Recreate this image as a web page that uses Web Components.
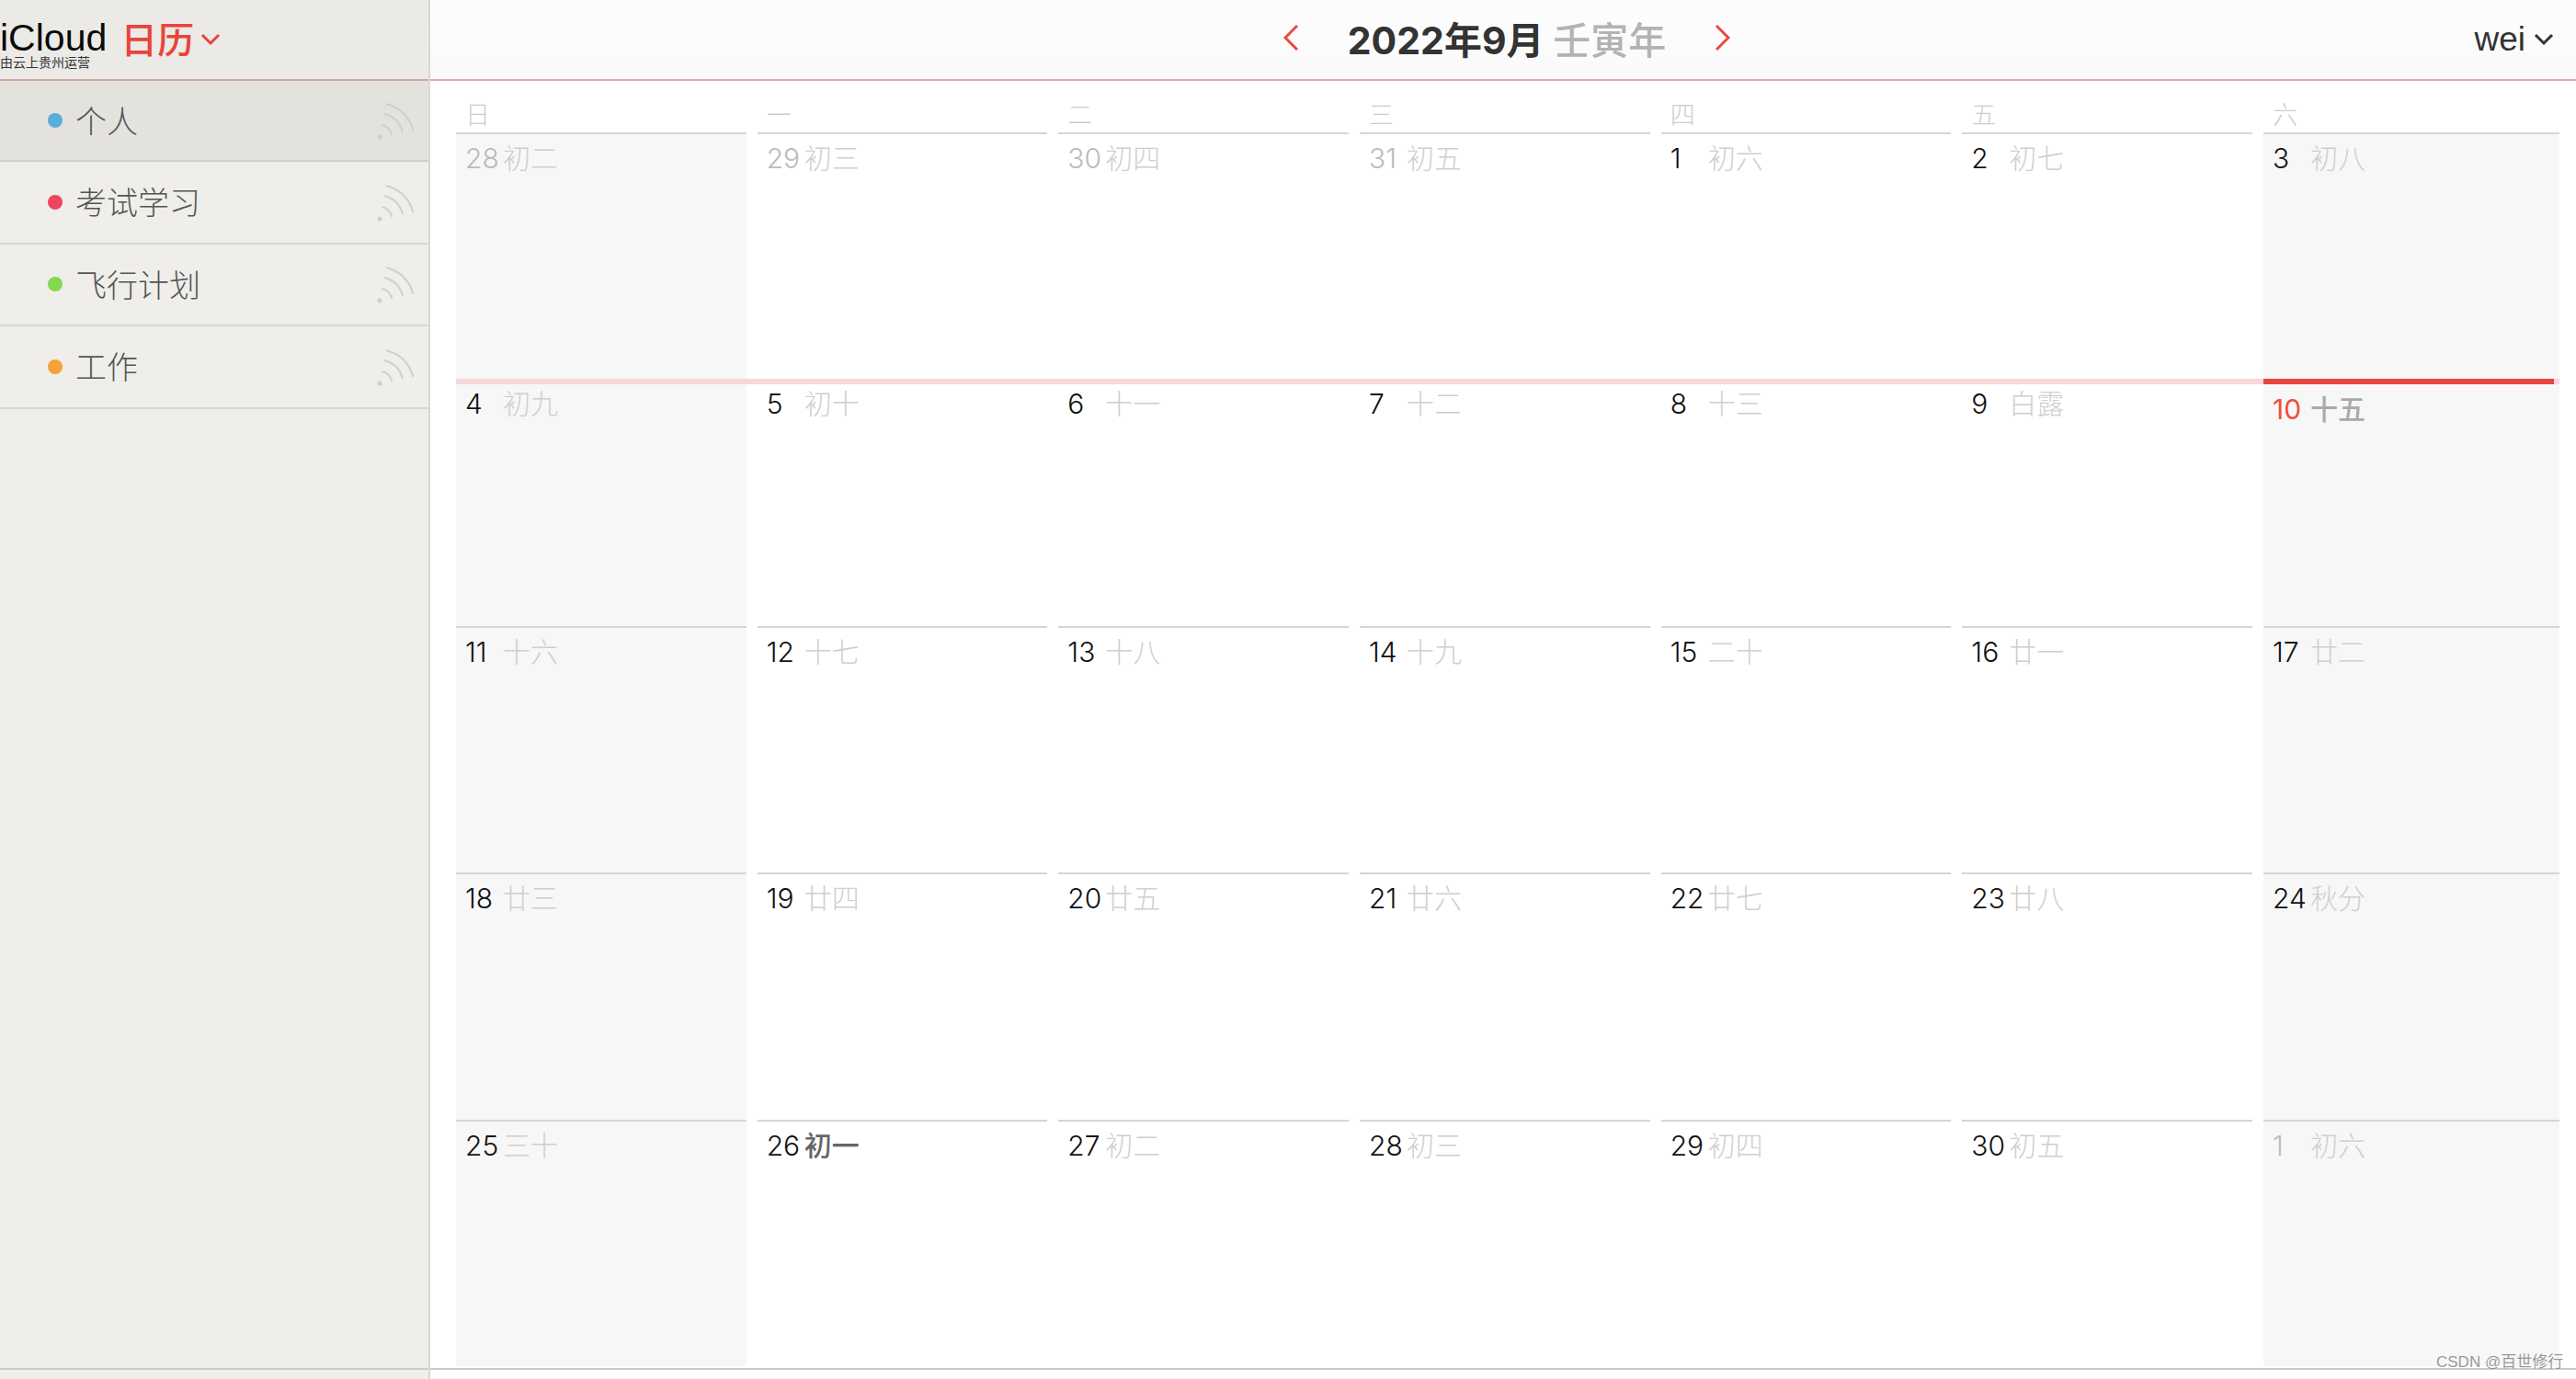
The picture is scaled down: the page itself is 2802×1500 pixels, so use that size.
<!DOCTYPE html>
<html lang="zh">
<head>
<meta charset="utf-8">
<title>iCloud 日历</title>
<style>
	html, body { margin: 0; height: 100%; background: #fff; }
	body { font-family: 'Liberation Sans', 'Noto Sans CJK SC', sans-serif; }
</style>
</head>
<body>
<cal-app>
	<cal-sidebar slot="side">
		<cal-item color="#59acdc" active>个人</cal-item>
		<cal-item color="#ef4560">考试学习</cal-item>
		<cal-item color="#83d94f">飞行计划</cal-item>
		<cal-item color="#f5a13c">工作</cal-item>
	</cal-sidebar>
	<cal-main slot="main"></cal-main>
</cal-app>

<script>
const FONT = `'Liberation Sans', 'Noto Sans CJK SC', sans-serif`;
const LIGHT = `'Inter', 'Noto Sans CJK SC', sans-serif`;

class CalApp extends HTMLElement {
	constructor() {
		super();
		this.attachShadow({ mode: 'open' });
		this.shadowRoot.innerHTML = `
			<style>
				:host { display: flex; width: 2802px; height: 1500px; overflow: hidden; position: relative; }
				.mark {
					position: absolute; left: 2650px; top: 1470px;
					font: 17px/24px ${FONT}; color: rgba(120,120,120,0.75); white-space: nowrap;
				}
			</style>
			<slot name="side"></slot>
			<slot name="main"></slot>
			<div class="mark">CSDN @百世修行</div>
		`;
	}
}

class CalSidebar extends HTMLElement {
	constructor() {
		super();
		this.attachShadow({ mode: 'open' });
		this.shadowRoot.innerHTML = `
			<style>
				:host {
					display: flex; flex-direction: column; width: 468px; flex: none;
					background: #efeeea; border-right: 2px solid #d8d8d4; box-sizing: border-box;
				}
				.logo {
					height: 88px; box-sizing: border-box; background: #ebeae6;
					border-bottom: 2px solid #cfa79f; line-height: 1;
				}
				.row1 { display: flex; align-items: center; height: 56px; padding-top: 26px; box-sizing: border-box; }
				.icloud { font: 41px ${FONT}; color: #0a0a0a; }
				.cal { font: 500 40px ${FONT}; color: #e8443a; margin-left: 15px; }
				.row1 svg { margin-left: 7px; margin-top: 4px; }
				.sub { font: 14px ${FONT}; color: #333; margin-top: 1px; }
				.fill { flex: 1; border-bottom: 2px solid #cccbc8; }
				.strip { height: 10px; }
			</style>
			<div class="logo">
				<div class="row1">
					<span class="icloud">iCloud</span><span class="cal">日历</span>
					<svg width="22" height="14" viewBox="0 0 22 14"><path d="M2 2 L11 11 L20 2" fill="none" stroke="#e8443a" stroke-width="3"/></svg>
				</div>
				<div class="sub">由云上贵州运营</div>
			</div>
			<slot></slot>
			<div class="fill"></div>
			<div class="strip"></div>
		`;
	}
}

class CalItem extends HTMLElement {
	constructor() {
		super();
		this.attachShadow({ mode: 'open' });
	}

	connectedCallback() {
		const color = this.getAttribute('color');
		this.shadowRoot.innerHTML = `
			<style>
				:host {
					display: flex; align-items: center; height: 89.5px; box-sizing: border-box;
					padding: 0 14px 0 52px; border-bottom: 2px solid #d8d7d1;
					font: 300 34px ${FONT}; color: #555;
				}
				:host([active]) { height: 88px; background: #e3e2dd; border-bottom-color: #cfcec7; }
				.dot { width: 16px; height: 16px; border-radius: 50%; background: ${color}; flex: none; margin-right: 14px; }
				.name { flex: 1; position: relative; top: -1px; }
				svg { flex: none; }
			</style>
			<span class="dot"></span>
			<span class="name"><slot></slot></span>
			<svg width="42" height="42" viewBox="0 0 42 42" fill="none" stroke="#d0cfc9" stroke-width="2">
				<circle cx="3" cy="39" r="2.6" fill="#d0cfc9" stroke="none"/>
				<path d="M5.5 26 Q14 28 16.5 37"/>
				<path d="M8 14 Q24 18 28 34"/>
				<path d="M10 3 Q33 9 39.5 32"/>
			</svg>
		`;
	}
}

class CalHeader extends HTMLElement {
	constructor() {
		super();
		this.attachShadow({ mode: 'open' });
		this.shadowRoot.innerHTML = `
			<style>
				:host {
					display: grid; grid-template-columns: 1fr auto 1fr; align-items: center;
					height: 88px; box-sizing: border-box; padding: 0 24px 4px 0;
					background: linear-gradient(#fdfdfd, #fafafa); border-bottom: 2px solid #dcaea9;
				}
				.nav { grid-column: 2; display: flex; align-items: center; gap: 54px; margin-left: 32px; }
				.title { font: 700 41px ${LIGHT}; color: #333; white-space: nowrap; }
				.title span { font-weight: 500; color: #b3b3b3; }
				.user { grid-column: 3; justify-self: end; display: flex; align-items: center; gap: 9px; font: 37px ${FONT}; color: #333; margin-top: 4px; }
			</style>
			<div class="nav">
				<svg width="16" height="28" viewBox="0 0 16 28"><path d="M15 1 L2 14 L15 27" fill="none" stroke="#e9493d" stroke-width="3"/></svg>
				<div class="title">2022年9月 <span>壬寅年</span></div>
				<svg width="16" height="28" viewBox="0 0 16 28"><path d="M1 1 L14 14 L1 27" fill="none" stroke="#e9493d" stroke-width="3"/></svg>
			</div>
			<div class="user">wei
				<svg width="22" height="14" viewBox="0 0 22 14"><path d="M2 2 L11 11 L20 2" fill="none" stroke="#333" stroke-width="3"/></svg>
			</div>
		`;
	}
}

const COLS = 'repeat(6, 1fr) 322px';

class CalWeekdays extends HTMLElement {
	constructor() {
		super();
		this.attachShadow({ mode: 'open' });
		const names = ['日', '一', '二', '三', '四', '五', '六'];
		this.shadowRoot.innerHTML = `
			<style>
				:host { display: grid; grid-template-columns: ${COLS}; column-gap: 12px; height: 58px; }
				div {
					border-bottom: 2px solid #d5d5d5; padding: 20px 0 0 10px; box-sizing: border-box;
					font: 300 27px/36px ${LIGHT}; color: #cccccc;
				}
			</style>
			${names.map((n) => `<div>${n}</div>`).join('')}
		`;
	}
}

class CalDay extends HTMLElement {
	constructor() {
		super();
		this.attachShadow({ mode: 'open' });
	}

	connectedCallback() {
		const num = this.getAttribute('num');
		const lunar = this.getAttribute('lunar');
		this.shadowRoot.innerHTML = `
			<style>
				:host {
					display: flex; align-items: flex-start; position: relative; box-sizing: border-box;
					padding: 8px 0 0 10px; border-top: 2px solid #d5d5d5;
					font-family: ${LIGHT}; font-weight: 300; line-height: 36px;
				}
				:host([first]) { border-top: none; }
				:host([week]) { border-top: none; padding-top: 3px; }
				:host([weekend]) { background: #f7f7f7; }
				.num { width: 41px; flex: none; font-size: 30px; color: #111; }
				:host([dim]) .num { color: #bbb; }
				.lunar { font-size: 30px; color: #cfcfcf; }
				:host([strong]) .lunar { color: #666; font-weight: 500; }
				:host([today]) .num { color: #f04e38; font-weight: 400; }
				:host([today]) .lunar { color: #aaa; font-weight: 500; }
				:host([today]) { padding-top: 9px; }
				:host([today])::before {
					content: ''; position: absolute; left: 0; right: 6px; top: -6px; height: 6px; background: #e84542;
				}
			</style>
			<span class="num">${num}</span><span class="lunar">${lunar}</span>
		`;
	}
}

class CalWeek extends HTMLElement {
	constructor() {
		super();
		this.attachShadow({ mode: 'open' });
		this.shadowRoot.innerHTML = `
			<style>
				:host { display: grid; grid-template-columns: ${COLS}; column-gap: 12px; box-sizing: border-box; }
				:host([current]) { border-top: 6px solid #f6d8d8; }
			</style>
			<slot></slot>
		`;
	}
}

const WEEKS = [
	['28 初二', '29 初三', '30 初四', '31 初五', '1 初六', '2 初七', '3 初八'],
	['4 初九', '5 初十', '6 十一', '7 十二', '8 十三', '9 白露', '10 十五'],
	['11 十六', '12 十七', '13 十八', '14 十九', '15 二十', '16 廿一', '17 廿二'],
	['18 廿三', '19 廿四', '20 廿五', '21 廿六', '22 廿七', '23 廿八', '24 秋分'],
	['25 三十', '26 初一', '27 初二', '28 初三', '29 初四', '30 初五', '1 初六'],
];
const HEIGHTS = [266, 269, 268, 269, 268];

class CalMain extends HTMLElement {
	constructor() {
		super();
		this.attachShadow({ mode: 'open' });
		this.shadowRoot.innerHTML = `
			<style>
				:host { display: flex; flex-direction: column; flex: 1; min-width: 0; }
				cal-header { flex: none; }
				.body { flex: 1; padding: 0 18px 0 28px; border-bottom: 2px solid #cccbc8; box-sizing: border-box; }
				.strip { height: 10px; }
			</style>
			<cal-header></cal-header>
			<div class="body">
				<cal-weekdays></cal-weekdays>
				<div id="weeks"></div>
			</div>
			<div class="strip"></div>
		`;
		const wrap = this.shadowRoot.getElementById('weeks');
		WEEKS.forEach((week, w) => {
			const row = document.createElement('cal-week');
			row.style.height = HEIGHTS[w] + 'px';
			if (w === 1) row.setAttribute('current', '');
			week.forEach((item, d) => {
				const [num, lunar] = item.split(' ');
				const day = document.createElement('cal-day');
				day.setAttribute('num', num);
				day.setAttribute('lunar', lunar);
				if (d === 0 || d === 6) day.setAttribute('weekend', '');
				if (w === 0) day.setAttribute('first', '');
				if (w === 1) day.setAttribute('week', '');
				if ((w === 0 && d < 4) || (w === 4 && d === 6)) day.setAttribute('dim', '');
				if (w === 1 && d === 6) day.setAttribute('today', '');
				if (w === 4 && d === 1) day.setAttribute('strong', '');
				row.appendChild(day);
			});
			wrap.appendChild(row);
		});
	}
}

customElements.define('cal-app', CalApp);
customElements.define('cal-sidebar', CalSidebar);
customElements.define('cal-item', CalItem);
customElements.define('cal-header', CalHeader);
customElements.define('cal-weekdays', CalWeekdays);
customElements.define('cal-day', CalDay);
customElements.define('cal-week', CalWeek);
customElements.define('cal-main', CalMain);
</script>
</body>
</html>
